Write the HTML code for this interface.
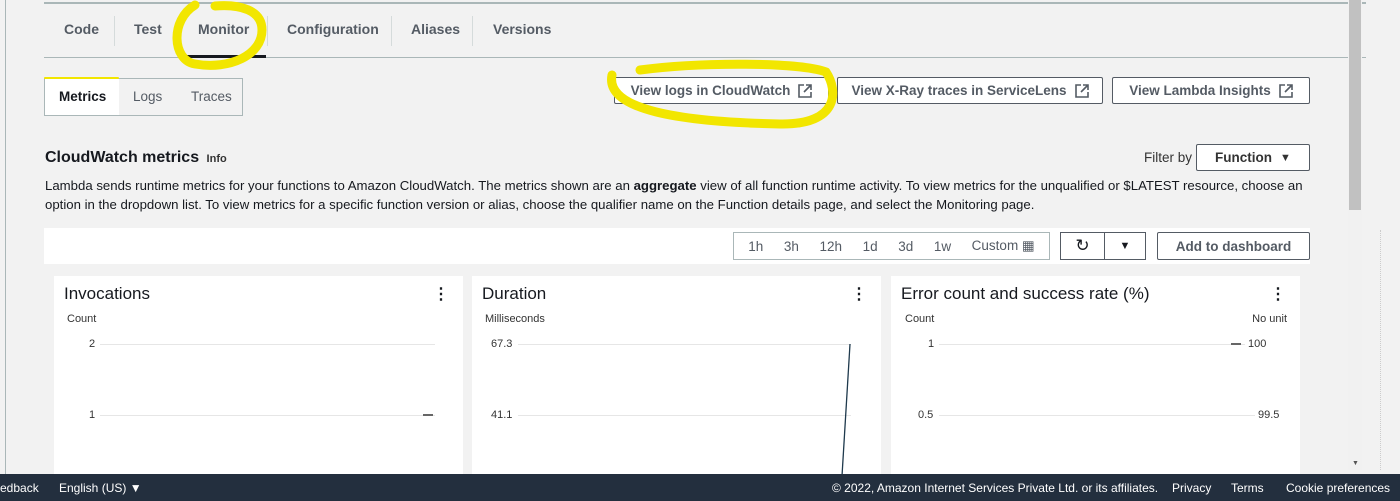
<!DOCTYPE html>
<html><head><meta charset="utf-8"><style>
*{margin:0;padding:0;box-sizing:border-box}
body{width:1400px;height:501px;overflow:hidden;background:#f2f2f2;font-family:"Liberation Sans",sans-serif;color:#16191f;position:relative}
.a{position:absolute}
.tab{position:absolute;top:21px;font-size:14px;font-weight:bold;color:#545b64}
.sep{position:absolute;top:16px;width:1px;height:30px;background:#d5dbdb}
.btn{position:absolute;top:77px;height:27px;border:1px solid #545b64;background:#fff;font-size:13.5px;font-weight:bold;color:#545b64;display:flex;align-items:center;justify-content:center;gap:8px;border-radius:2px}
.card{position:absolute;top:276px;height:200px;background:#fff;width:409px}
.ct{position:absolute;top:8px;left:10px;font-size:17px;color:#16191f}
.dots{position:absolute;top:8px;right:14px;font-size:16px;font-weight:bold}
.sm{position:absolute;font-size:11px;color:#333}
.gl{position:absolute;height:1px;background:#e6e6e6}
.ft{position:absolute;top:481px;font-size:12px;color:#fff}
</style></head><body>
<div class="a" style="left:5px;top:0;width:1px;height:474px;background:#aab7b8"></div>
<div class="a" style="left:44px;top:2px;width:1322px;height:2px;background:#aab7b8"></div>
<div class="a" style="left:44px;top:57px;width:1322px;height:1px;background:#aab7b8"></div>
<div class="tab" style="left:64px">Code</div>
<div class="sep" style="left:114px"></div>
<div class="tab" style="left:134px">Test</div>
<div class="sep" style="left:180px"></div>
<div class="tab" style="left:198px">Monitor</div>
<div class="a" style="left:180px;top:55px;width:86px;height:3px;background:#16191f"></div>
<div class="sep" style="left:267px"></div>
<div class="tab" style="left:287px">Configuration</div>
<div class="sep" style="left:391px"></div>
<div class="tab" style="left:411px">Aliases</div>
<div class="sep" style="left:472px"></div>
<div class="tab" style="left:493px">Versions</div>

<div class="a" style="left:44px;top:78px;width:199px;height:38px;border:1px solid #aab7b8;background:#f2f2f2"></div>
<div class="a" style="left:45px;top:79px;width:74px;height:36px;background:#fff"></div>
<div class="a" style="left:59px;top:89px;font-size:13.5px;font-weight:bold">Metrics</div>
<div class="a" style="left:133px;top:89px;font-size:13.5px;color:#545b64">Logs</div>
<div class="a" style="left:191px;top:89px;font-size:13.5px;color:#545b64">Traces</div>

<div class="btn" style="left:614px;width:215px">View logs in CloudWatch <svg width="14" height="14" viewBox="0 0 14 14" fill="none" stroke="#545b64" stroke-width="1.6"><path d="M6 1H1v12h12V8M8 1h5v5M13 1L6 8"/></svg></div>
<div class="btn" style="left:837px;width:266px">View X-Ray traces in ServiceLens <svg width="14" height="14" viewBox="0 0 14 14" fill="none" stroke="#545b64" stroke-width="1.6"><path d="M6 1H1v12h12V8M8 1h5v5M13 1L6 8"/></svg></div>
<div class="btn" style="left:1112px;width:198px">View Lambda Insights <svg width="14" height="14" viewBox="0 0 14 14" fill="none" stroke="#545b64" stroke-width="1.6"><path d="M6 1H1v12h12V8M8 1h5v5M13 1L6 8"/></svg></div>

<div class="a" style="left:45px;top:149px;font-size:16px;font-weight:bold">CloudWatch metrics <span style="font-size:11px;color:#333;font-weight:bold;margin-left:3px">Info</span></div>
<div class="a" style="left:1144px;top:150px;font-size:13.5px;color:#333">Filter by</div>
<div class="btn" style="left:1196px;top:144px;width:114px;height:27px;color:#333">Function <span style="font-size:11px">▼</span></div>
<div class="a" style="left:45px;top:176px;width:1262px;font-size:13.2px;line-height:19px;color:#16191f">Lambda sends runtime metrics for your functions to Amazon CloudWatch. The metrics shown are an <b>aggregate</b> view of all function runtime activity. To view metrics for the unqualified or $LATEST resource, choose an option in the dropdown list. To view metrics for a specific function version or alias, choose the qualifier name on the Function details page, and select the Monitoring page.</div>

<div class="a" style="left:44px;top:228px;width:1266px;height:36px;background:#fff"></div>
<div class="a" style="left:733px;top:232px;width:317px;height:28px;border:1px solid #aab7b8;font-size:13.5px;color:#545b64;display:flex;align-items:center;justify-content:space-around;padding:0 4px"><span>1h</span><span>3h</span><span>12h</span><span>1d</span><span>3d</span><span>1w</span><span>Custom ▦</span></div>
<div class="a" style="left:1060px;top:232px;width:86px;height:28px;border:1px solid #545b64;display:flex"><div style="width:44px;border-right:1px solid #545b64;text-align:center;font-size:17px;line-height:26px">↻</div><div style="flex:1;text-align:center;font-size:11px;line-height:26px">▼</div></div>
<div class="btn" style="left:1157px;top:232px;width:153px;height:28px">Add to dashboard</div>

<div class="card" style="left:54px">
 <div class="ct">Invocations</div><div class="dots">⋮</div>
 <div class="sm" style="left:13px;top:37px">Count</div>
 <div class="sm" style="left:35px;top:62px">2</div><div class="gl" style="left:46px;top:68px;width:335px"></div>
 <div class="sm" style="left:35px;top:133px">1</div><div class="gl" style="left:46px;top:139px;width:335px"></div>
 <div class="a" style="left:369px;top:138px;width:10px;height:2px;background:#666"></div>
</div>
<div class="card" style="left:472px">
 <div class="ct">Duration</div><div class="dots">⋮</div>
 <div class="sm" style="left:13px;top:37px">Milliseconds</div>
 <div class="sm" style="left:19px;top:62px">67.3</div><div class="gl" style="left:46px;top:68px;width:333px"></div>
 <div class="sm" style="left:19px;top:133px">41.1</div><div class="gl" style="left:46px;top:139px;width:333px"></div>
 <svg class="a" style="left:0;top:0" width="409" height="200"><line x1="378" y1="68" x2="370" y2="200" stroke="#1f3a4d" stroke-width="1.3"/></svg>
</div>
<div class="card" style="left:891px">
 <div class="ct">Error count and success rate (%)</div><div class="dots">⋮</div>
 <div class="sm" style="left:14px;top:37px">Count</div>
 <div class="sm" style="right:13px;top:37px">No unit</div>
 <div class="sm" style="left:37px;top:62px">1</div><div class="gl" style="left:48px;top:68px;width:306px"></div>
 <div class="a" style="left:340px;top:67px;width:10px;height:2px;background:#666"></div>
 <div class="sm" style="left:357px;top:62px">100</div>
 <div class="sm" style="left:27px;top:133px">0.5</div><div class="gl" style="left:48px;top:139px;width:316px"></div>
 <div class="sm" style="left:367px;top:133px">99.5</div>
</div>

<div class="a" style="left:1348px;top:0;width:14px;height:470px;background:#f1f1f1"></div>
<div class="a" style="left:1349px;top:0;width:12px;height:210px;background:#c1c1c1"></div>
<div class="a" style="left:1352px;top:460px;font-size:7px;color:#555">▼</div>
<div class="a" style="left:1380px;top:230px;width:1px;height:240px;border-left:1px dotted #ccc"></div>

<div class="a" style="left:0;top:474px;width:1400px;height:27px;background:#232f3e"></div>
<div class="ft" style="left:0">edback</div>
<div class="ft" style="left:59px">English (US) ▼</div>
<div class="ft" style="left:832px">© 2022, Amazon Internet Services Private Ltd. or its affiliates.</div>
<div class="ft" style="left:1172px">Privacy</div>
<div class="ft" style="left:1231px">Terms</div>
<div class="ft" style="left:1286px">Cookie preferences</div>

<svg class="a" style="left:0;top:0" width="1400" height="501">
 <g fill="none" stroke="#f2e600" stroke-linecap="round">
  <path d="M195 5 C170 20,172 60,195 64 C230 70,262 55,262 30 C262 10,240 4,215 6" stroke-width="9"/>
  <path d="M612 75 C605 110,680 122,780 124 C840 125,838 90,826 72 C800 62,700 62,640 70" stroke-width="9"/>
  <line x1="45" y1="78" x2="118" y2="78" stroke-width="2"/>
 </g>
</svg>
</body></html>
